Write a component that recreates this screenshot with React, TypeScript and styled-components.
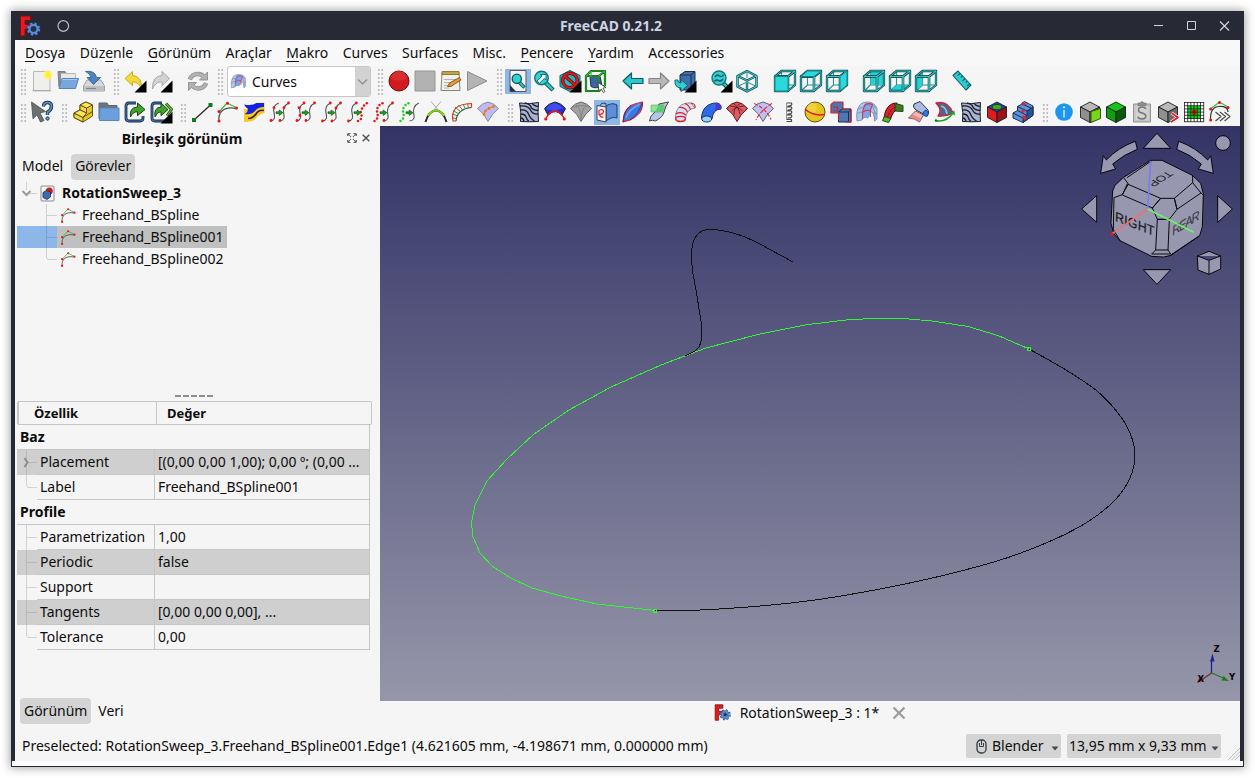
import React, { ReactNode } from "react";
import styled, { createGlobalStyle, css } from "styled-components";

const GlobalStyle = createGlobalStyle`
  html, body { margin: 0; padding: 0; background: #fff; }
  body { overflow: hidden; font-family: "Noto Sans", sans-serif; font-size: 13.98px; color: #0c0c0c; }
  *, *::before, *::after { box-sizing: border-box; }
`;

const LINE = "#c6c6c6";
const SURFACE = "#f5f5f5";
const FRAME = "#272a34";

/* ---------- window frame ---------- */

const Page = styled.div`
  width: 1255px;
  height: 778px;
  padding: 11px;
  overflow: hidden;
`;

const Window = styled.div`
  display: flex;
  flex-direction: column;
  width: 1233px;
  height: 756px;
  background: ${FRAME};
  box-shadow: 0 0 9px 1px rgba(0, 0, 0, 0.36);
  line-height: 20px;
  white-space: nowrap;
`;

const TitleBar = styled.header`
  display: grid;
  grid-template-columns: 1fr auto 1fr;
  align-items: center;
  height: 29px;
  flex: none;
  padding: 0 13px 0 8px;
  color: #cfd3e4;
`;

const TitleSide = styled.div<{ $end?: boolean }>`
  display: flex;
  align-items: center;
  justify-content: ${(p) => (p.$end ? "flex-end" : "flex-start")};
  gap: ${(p) => (p.$end ? "21px" : "15px")};
`;

const TitleText = styled.h1`
  margin: 0;
  padding-right: 28px;
  font-size: 13.9px;
  font-weight: 700;
  line-height: 20px;
`;

const Client = styled.div`
  display: flex;
  flex-direction: column;
  flex: none;
  height: 721px;
  margin: 0 4px;
  background: ${SURFACE};
`;

const BottomEdge = styled.div`
  height: 5px;
  margin: 0 1px;
  background: #fafcfd;
`;

/* ---------- menu and toolbars ---------- */

const MenuBar = styled.nav`
  display: flex;
  align-items: center;
  height: 26px;
  flex: none;
  gap: 14.5px;
  padding: 0 0 0 10px;
  background: #f8f8f8;
`;

const MenuItem = styled.span`
  u { text-decoration-thickness: 1px; text-underline-offset: 3px; }
`;

const ToolBar = styled.div<{ $tall?: boolean }>`
  display: flex;
  align-items: center;
  height: ${(p) => (p.$tall ? 31 : 29)}px;
  flex: none;
  padding: ${(p) => (p.$tall ? 0 : 2)}px 0 0 5px;
`;

const Grip = styled.span<{ $before?: number; $tall?: boolean }>`
  width: 7px;
  height: ${(p) => (p.$tall ? 27 : 20)}px;
  margin: 0 2px 0 ${(p) => p.$before ?? 6}px;
  flex: none;
  background-image: radial-gradient(circle at 50% 50%, #bdbdbd 0 1.1px, transparent 1.4px);
  background-size: 3.5px 4px;
`;

const ToolButton = styled.span<{ $on?: boolean; $before?: number }>`
  display: flex;
  align-items: flex-start;
  justify-content: center;
  width: 26px;
  height: 25px;
  flex: none;
  margin-left: ${(p) => p.$before ?? 0}px;
  ${(p) => p.$on && css`background: #8db7e9;`}
`;

const Combo = styled.div`
  display: flex;
  align-items: center;
  width: 144px;
  height: 31px;
  flex: none;
  margin-left: 1px;
  border: 1px solid ${LINE};
  border-radius: 3px;
  background: #fff;
  padding-left: 2px;
  overflow: hidden;
`;

const ComboLabel = styled.span`
  flex: 1;
  padding-left: 5px;
`;

const ComboArrow = styled.span`
  display: flex;
  align-items: center;
  justify-content: center;
  width: 15px;
  height: 100%;
  background: #d2d2d2;
`;

/* ---------- body ---------- */

const Body = styled.div`
  display: flex;
  height: 602px;
  flex: none;
`;

const Dock = styled.aside`
  display: flex;
  flex-direction: column;
  width: 365px;
  flex: none;
`;

const DockTitle = styled.div`
  display: flex;
  align-items: center;
  height: 26px;
  padding: 0 10px 0 4px;
  font-weight: 700;
  font-size: 14px;
`;

const DockTitleText = styled.span`
  flex: 1;
  text-align: center;
  padding-right: 2px;
`;

const DockActions = styled.span`
  display: flex;
  gap: 5px;
  align-items: center;
  padding-bottom: 2px;
`;

const Tabs = styled.div<{ $bottom?: boolean }>`
  display: flex;
  align-items: center;
  height: 30px;
  padding: 0 0 0 ${(p) => (p.$bottom ? 5 : 3)}px;
  gap: ${(p) => (p.$bottom ? 3 : 4)}px;
  line-height: ${(p) => (p.$bottom ? 26 : 24)}px;
  ${(p) => p.$bottom && css`margin-top: auto; margin-bottom: 2px;`}
`;

const Tab = styled.span<{ $active?: boolean }>`
  height: 26px;
  padding: 0 4px;
  border-radius: 4px;
  background: ${(p) => (p.$active ? "#d4d4d4" : "transparent")};
`;

const Tree = styled.ul`
  list-style: none;
  margin: 0;
  padding: 0 0 0 2px;
  height: 210px;
`;

const TreeRow = styled.li`
  display: flex;
  align-items: center;
  height: 22px;
`;

const Branch = styled.span<{ $w: number; $on?: boolean }>`
  display: flex;
  width: ${(p) => p.$w}px;
  height: 22px;
  background: ${(p) => (p.$on ? "#8db7e9" : "transparent")};
`;

const TreeLabel = styled.span<{ $on?: boolean; $root?: boolean }>`
  display: flex;
  align-items: center;
  gap: 5px;
  height: 22px;
  padding: 0 3.500px 0 3px;
  background: ${(p) => (p.$on ? "#bfc0c0" : "transparent")};
  ${(p) => p.$root && css`font-weight: 700; font-size: 13.95px; gap: 7px;`}
`;

const Splitter = styled.div`
  display: flex;
  justify-content: center;
  align-items: center;
  gap: 2px;
  height: 7px;
  padding-right: 7px;
`;

const SplitDash = styled.i`
  width: 6px;
  height: 2px;
  background: #8e8e8e;
`;

const PropHead = styled.div`
  display: grid;
  grid-template-columns: 138px 1fr;
  width: 355px;
  height: 24px;
  margin: 2px 0 0 2px;
  border: 1px solid ${LINE};
  border-left-width: 2px;
  border-radius: 2px;
  font-weight: 700;
  font-size: 13px;
  line-height: 22px;
`;

const PropHeadCell = styled.span<{ $pad: number; $first?: boolean }>`
  padding-left: ${(p) => p.$pad}px;
  border-right: ${(p) => (p.$first ? `1px solid ${LINE}` : "0")};
`;

const PropTable = styled.div`
  width: 353px;
  margin-left: 2px;
  border-right: 1px solid ${LINE};
`;

const PropGroup = styled.div`
  height: 25px;
  padding-left: 3px;
  border-bottom: 1px solid ${LINE};
  font-weight: 700;
  font-size: 14px;
  line-height: 24px;
`;

const PropRow = styled.div<{ $alt?: boolean }>`
  display: grid;
  grid-template-columns: 20px 118px 1fr;
  height: 25px;
  line-height: 24px;
  background: ${(p) => (p.$alt ? "#cfcfcf" : "transparent")};
`;

const PropName = styled.span`
  padding-left: 3px;
  border-bottom: 1px solid ${LINE};
  border-right: 1px solid ${LINE};
`;

const PropValue = styled.span`
  padding-left: 3px;
  border-bottom: 1px solid ${LINE};
`;

const Workspace = styled.main`
  display: flex;
  flex-direction: column;
  width: 860px;
`;

const Viewport = styled.div`
  height: 575px;
  background: linear-gradient(#333366, #9696aa);
  svg { display: block; }
`;

const DocTabs = styled.div`
  display: flex;
  justify-content: center;
  align-items: center;
  height: 27px;
  padding: 0 0 4px 0;
`;

const DocTab = styled.span`
  display: flex;
  align-items: center;
`;

const DocName = styled.span`
  margin: 0 13px 0 9px;
`;

const StatusBar = styled.footer`
  display: flex;
  align-items: center;
  height: 33px;
  padding: 3px 0 0 7px;
`;

const StatusText = styled.span`
  flex: 1;
`;

const StatusButton = styled.span<{ $w: number }>`
  display: flex;
  align-items: center;
  justify-content: space-between;
  width: ${(p) => p.$w}px;
  height: 24px;
  margin-right: 6px;
  padding: 0 2px;
  border-radius: 2px;
  background: #d4d4d4;

  > svg { margin-top: 4px; }
`;

const ButtonLabel = styled.span<{ $icon?: boolean }>`
  display: flex;
  align-items: center;
  gap: 5px;
  padding-left: ${(p) => (p.$icon ? 8 : 0)}px;
`;

const ResizeCorner = styled.span`
  align-self: flex-end;
  height: 13px;
  width: 12px;
  margin-left: 1px;
  svg { display: block; }
`;

/* ---------- icons ---------- */

const Svg = ({ children, size = 24, box = "0 0 24 24" }: { children: ReactNode; size?: number; box?: string }) => (
  <svg width={size} height={size} viewBox={box} fill="none" strokeLinejoin="round">
    {children}
  </svg>
);

const Dots = ({ at, c = "#f01010", r = 1.25 }: { at: number[][]; c?: string; r?: number }) => (
  <g fill={c}>{at.map(([x, y], i) => <circle key={i} cx={x} cy={y} r={r} />)}</g>
);

const Corner = () => <path d="M23.500 11.500v12h-12z" fill="#000" />;

const Logo = ({ size }: { size: number }) => (
  <Svg size={size} box="0 0 22 22">
    <path d="M1.500 1h10v4.500H6v4h5V14H6v7H1.500z" fill="#e31b20" stroke="#7c0d10" strokeWidth="1" />
    <circle cx="14.500" cy="14" r="5.600" stroke="#20457a" strokeWidth="3" strokeDasharray="2.400 2" />
    <circle cx="14.500" cy="14" r="4" stroke="#20457a" strokeWidth="3.200" />
    <circle cx="14.500" cy="14" r="5.500" stroke="#5c8fd6" strokeWidth="1.800" strokeDasharray="2.200 2.200" />
    <circle cx="14.500" cy="14" r="4" stroke="#5c8fd6" strokeWidth="1.900" />
    <circle cx="14.500" cy="14" r="2.300" fill="#23304a" />
  </Svg>
);

const SplineMini = ({ size = 24 }: { size?: number }) => (
  <Svg size={size}>
    <path d="M3 12 11 3l10 5" stroke="#3fb83f" strokeWidth="1.200" />
    <path d="M3 21C2 13 7 6 20 8.500" stroke="#555" strokeWidth="1.300" />
    <Dots at={[[3, 21], [3, 11.500], [11.500, 3.200], [20.500, 8]]} r={1.500} />
  </Svg>
);

type BlendKind = { left?: number[][]; right?: number[][]; dotLeft?: string; dotRight?: string };
const Blend = ({ left = [], right = [], dotLeft, dotRight }: BlendKind) => (
  <Svg>
    {dotLeft ? (
      <Dots c={dotLeft} at={[[2.500, 21], [5, 18.500], [5.700, 15], [5, 11.500], [5.500, 8], [7.500, 5], [10.500, 3.200]]} r={1.250} />
    ) : (
      <path d="M2.500 21c4.500-.5 4.500-4 3.700-7S5 9.500 6.500 6.500 9.500 4 10.500 3" stroke="#505050" strokeWidth="1.100" />
    )}
    {dotRight ? (
      <Dots c={dotRight} at={[[12, 21], [14.800, 19], [15.600, 15.500], [14.800, 12], [16, 8.500], [18, 5.500], [20.800, 3.200]]} r={1.250} />
    ) : (
      <path d="M11.500 21c5-.5 5-3.500 4.300-7s0-8.500 5-11" stroke="#505050" strokeWidth="1.100" />
    )}
    <path d="M8 11.800h3.200V10l3.800 2.700-3.800 2.700v-1.800H8z" fill="#14a314" stroke="#0a4a0a" strokeWidth=".6" />
    <Dots at={[...left, ...right]} r={1.400} />
  </Svg>
);

const F = "M2 7.500h13V22H2z";
const T = "M2 7.500 8.500 2H22l-7 5.500z";
const R = "M15 7.500 22 2v14l-7 6z";
const B = "M8.500 2H22v14H8.500z";
const BT = "M2 22 8.500 16H22l-7 6z";
const L = "M2 7.500 8.500 2v14L2 22z";
const ViewCube = ({ face }: { face: string }) => (
  <Svg>
    <path d={B} stroke="#2a8f93" strokeWidth="1.100" />
    <path d="M2 22 8.500 16" stroke="#2a8f93" strokeWidth="1.100" />
    <path d={face} fill="#27d0d4" />
    <g stroke="#0b5054" strokeWidth="2.300"><path d={F} /><path d={T} /><path d={R} /></g>
    <g stroke="#44c6c9" strokeWidth=".9"><path d={F} /><path d={T} /><path d={R} /></g>
    {(face === F || face === T || face === R) && <path d={face} fill="#2bd9dc" stroke="#128589" strokeWidth="1" />}
  </Svg>
);

const Box = ({ top, left, right, children }: { top: string; left: string; right: string; children?: ReactNode }) => (
  <Svg>
    <g stroke="#1d1d1d" strokeWidth=".9">
      <path d="M2.500 7 12 2l9.500 5L12 12z" fill={top} />
      <path d="M2.500 7 12 12v10.500L2.500 17.500z" fill={left} />
      <path d="M21.500 7 12 12v10.500l9.500-5z" fill={right} />
    </g>
    {children}
  </Svg>
);

const Zebra = () => (
  <Svg>
    <path d="M2.500 3q10 1.500 19-.5-1 9 0 19-9.500.5-18 0 1-9-1-18.500z" fill="#a9b3cf" stroke="#1c2030" strokeWidth="1" />
    <path d="M3 6q8-1 10.500 4t8 4M3.500 10q6-1 8 4t6 7M4 14q4 0 5 3t3 4.500M4 18q2 0 3 3M8 3q5 1 6 4t7.500 3.500M15 3q1.500 3 6.500 3.500" stroke="#1a1f2e" strokeWidth="1.350" />
  </Svg>
);

const Fan = ({ fill, edge = "#444", children }: { fill: string; edge?: string; children?: ReactNode }) => (
  <Svg>
    <path d="M1.500 8.500Q6 3 12 2 18 3 22.500 8.500 16 13.500 12 21.500 8.500 13.500 1.500 8.500z" fill={fill} stroke={edge} strokeWidth="1" />
    {children}
  </Svg>
);

const LensBase = ({ children }: { children?: ReactNode }) => (
  <Svg>
    <path d="m13.500 13.500 7.500 7.500" stroke="#06494d" strokeWidth="4.400" />
    <path d="m13.500 13.500 7 7" stroke="#2fc6ca" strokeWidth="2.500" />
    <circle cx="9.500" cy="9" r="6.800" fill="#35cfd3" stroke="#0f777b" strokeWidth="1.400" />
    {children}
  </Svg>
);

const CurvedSurface = ({ size = 24 }: { size?: number }) => (
  <Svg size={size}>
    <path d="M2 21C1 11 3 4 9 2.500 15 1 20 3 22 8.500V19q-1.500 1.500-2.500 2Q19.500 13 16 11.500L13 18Q8 16 7 20z" fill="#a9c8f0" stroke="#8495b4" strokeWidth="1" />
    <path d="M2 14q5-4 6 0M3 9q5-3 7 1M20 19q1-7-2-12M9 6q7-3 12 2M18 13q2-1 4 1" stroke="#6a86b8" strokeWidth=".8" />
    <path d="M9 4.500Q14 2 18 5q-3 4-2.500 7L13 18H8q-1-7 1-13.500z" fill="#6f9de6" opacity=".8" />
    <path d="M7.500 19Q7 8 11 3.500M15.500 17Q14.500 9 18 4.500M8 12q4-3 7.500-1M10.500 4.500q4-2 7.500.5" stroke="#d33650" strokeWidth="1.100" />
  </Svg>
);

const icons: Record<string, ReactNode> = {
  new: (
    <Svg>
      <path d="M3.500 2.500H20V21.500H3.500z" fill="#efefec" stroke="#b9b9b5" />
      <path d="M2.500 21.800h18.500" stroke="#a5a5a0" strokeWidth="1" />
      <circle cx="18" cy="6" r="4.800" fill="#fcf58a" opacity=".75" /><circle cx="18" cy="6" r="2.900" fill="#fff02a" />
    </Svg>
  ),
  open: (
    <Svg>
      <path d="M2 2.500h7l1.500 2H19V18H3z" fill="#8a8f92" stroke="#7d8082" />
      <path d="M5 4.500h14V16H5z" fill="#e9e9e9" />
      <path d="M6 9.500h16.500l-3 10H3z" fill="#78a7de" stroke="#5583bd" />
      <path d="M6.500 10.500H21" stroke="#a9c9ef" />
    </Svg>
  ),
  save: (
    <Svg>
      <path d="M5 11h14l3.500 6v5H1.500v-5z" fill="#d6d8d9" stroke="#a0a3a5" />
      <path d="M2 17h20v4.500H2z" fill="#bcc0c2" /><path d="M4 19.500h10" stroke="#858585" strokeWidth="1.100" />
      <path d="M3.500 2.500Q13 1 14.500 8.500h4l-7 7-6.500-7H9Q8.500 5 3.500 2.500z" fill="#4c83c0" stroke="#2d5b8c" strokeWidth=".8" />
    </Svg>
  ),
  undo: (
    <Svg>
      <path d="M2 9.500 9.500 2.500v4Q19 7 18.500 20 16 13 9.500 12.800v4z" fill="#f5d839" stroke="#c4a11a" strokeWidth=".9" />
      <Corner />
    </Svg>
  ),
  redo: (
    <Svg>
      <path d="M20.500 9.500 13 2.500v4Q3 7 3.500 20 6 13 13 12.800v4z" fill="#d2d2d2" stroke="#a5a5a5" strokeWidth=".9" />
      <Corner />
    </Svg>
  ),
  refresh: (
    <Svg>
      <path d="M3.800 10.500Q6 5 12 5q3.500 0 5.500 2.500M20.200 14Q18 19.500 12 19.500q-3.500 0-5.500-2.500" stroke="#8e8e8e" strokeWidth="4.400" />
      <path d="M21.500 3v8h-8zM2.500 21.500v-8h8z" fill="#b2b2b2" stroke="#8e8e8e" strokeWidth=".9" />
      <path d="M4 10Q6 5 12 5q3.500 0 6 3M20 14.500q-2 5-8 5-3.500 0-6-3" stroke="#b2b2b2" strokeWidth="2.900" />
    </Svg>
  ),
  record: <Svg><circle cx="12" cy="12" r="10" fill="#d01a20" stroke="#6f0a0c" /><path d="M4 10a8 8 0 0 1 16 0q-8 3-16 0z" fill="#e0383b" opacity=".6" /></Svg>,
  stop: <Svg><path d="M2 2h20v20H2z" fill="#b2b2b2" stroke="#969696" /></Svg>,
  macro: (
    <Svg>
      <path d="M3 3.500h17l1 18H2z" fill="#f0efe9" stroke="#85837b" />
      <path d="M3 2.500h17v3H3z" fill="#c1a545" stroke="#7c6a27" strokeWidth=".8" />
      <path d="M5 10.500h12M5 13.500h8M5 16.500h6M5 19h5" stroke="#a5a5a5" strokeWidth=".8" />
      <path d="m8.500 17.500 3.500 0L22 11l-1.500-2.500L10.500 14z" fill="#e89a35" stroke="#6f4413" strokeWidth=".8" />
    </Svg>
  ),
  play: <Svg><path d="M2.500 2.500v19L22 12z" fill="#b4b4b4" stroke="#8c8c8c" /></Svg>,
  fit: (
    <Svg>
      <path d="M4 1.500h16v21H4z" fill="#f2f2f2" stroke="#5a5a5a" /><path d="M4 16v6.500h6z" fill="#30343a" />
      <path d="m13 13 5.500 5.500" stroke="#06494d" strokeWidth="3.600" /><path d="m13 13 5 5" stroke="#2fc6ca" strokeWidth="2" />
      <circle cx="10.800" cy="9.800" r="4.600" fill="#35cfd3" stroke="#06575b" strokeWidth="1.300" />
    </Svg>
  ),
  zoomSel: <LensBase><path d="m5 12 5-5-1.500-1.500h5.500V11l-1.600-1.600-4.900 4.800z" fill="#eafcfc" stroke="#06575b" strokeWidth=".8" /></LensBase>,
  drawStyle: (
    <Svg>
      <path d="m12 1.500 10 5v11l-10 5-10-5v-11z" fill="#20b9bd" stroke="#0a5c60" />
      <circle cx="12" cy="11.500" r="7.300" stroke="#54090c" strokeWidth="3.400" /><path d="m7 7 10 9" stroke="#54090c" strokeWidth="3.400" />
      <circle cx="12" cy="11.500" r="7.300" stroke="#e0191e" strokeWidth="2.100" /><path d="m7 7 10 9" stroke="#e0191e" strokeWidth="2.100" />
      <Corner />
    </Svg>
  ),
  bbox: (
    <Svg>
      <path d="M6 8.500q4-3.500 10-1l2 9q-6 4-11 1z" fill="#3c659f" stroke="#183459" />
      <g stroke="#0d4c10" strokeWidth="2.200"><path d="M2 7h13v15H2zM2 7l5-5h14l-6 5M21 2v14l-6 6" /></g>
      <g stroke="#32b436" strokeWidth="1.200"><path d="M2 7h13v15H2zM2 7l5-5h14l-6 5M21 2v14l-6 6M7 2v6" /></g>
      <path d="m14 13.500 8 5-3 .7 2 3.300-1.700 1-2-3.300-2.300 2z" fill="#fff" stroke="#222" strokeWidth=".7" />
    </Svg>
  ),
  back: <Svg><path d="m2 12 8.500-8v5.500H22v5H10.500V20z" fill="#2cc7cb" stroke="#0a5f63" strokeWidth="1.200" /></Svg>,
  forward: <Svg><path d="m22 12-8.500-8v5.500H2v5h11.500V20z" fill="#b9b9b9" stroke="#868686" strokeWidth="1.200" /></Svg>,
  link: (
    <Svg>
      <path d="m7 6 5-3.500h10V17l-4 4H7z" fill="#3f6ea8" stroke="#16304f" /><path d="M7 6h11l4-3.500M18 6v15" stroke="#16304f" />
      <path d="M2 11q-1 7.500 6 8v3.500l6.500-6L8 10.500v3.500q-3.500 0-3-3z" fill="#34cfd3" stroke="#0a5f63" strokeWidth=".9" />
      <Corner />
    </Svg>
  ),
  sync: (
    <Svg>
      <path d="m14 14 5 5" stroke="#06494d" strokeWidth="4.200" /><path d="m14 14 5 5" stroke="#2fc6ca" strokeWidth="2.400" />
      <circle cx="10" cy="9" r="7" fill="#35cfd3" stroke="#0f777b" strokeWidth="1.400" />
      <path d="M6 8q2-3 4.500-1.200t4-1.300M5.500 12.500q1.500-2.500 4-1t4.500-1.500" stroke="#0b5d61" strokeWidth="1.500" />
      <Corner />
    </Svg>
  ),
  iso: (
    <Svg>
      <g stroke="#0b5054" strokeWidth="2.400"><path d="m12 2 9.500 5v10.500l-9.500 5-9.500-5V7zM2.500 7l9.500 4.500L21.500 7M12 11.500v11" /></g>
      <path d="M2.500 17.500 12 13l9.500 4.500M12 2v7" stroke="#2a8f93" strokeWidth="1" />
      <g stroke="#44c4c8" strokeWidth="1"><path d="m12 2 9.500 5v10.500l-9.500 5-9.500-5V7zM2.500 7l9.500 4.500L21.500 7M12 11.500v11" /></g>
    </Svg>
  ),
  front: <ViewCube face={F} />,
  top: <ViewCube face={T} />,
  right: <ViewCube face={R} />,
  rear: <ViewCube face={B} />,
  bottom: <ViewCube face={BT} />,
  left: <ViewCube face={L} />,
  ruler: (
    <Svg>
      <path d="m3 6.500 5-4.500 13 14-5 5z" fill="#2fcbcf" stroke="#0a5f63" strokeWidth="1.100" />
      <path d="m10 4.500-2.400 2.200M12.500 7l-1.600 1.500M15 9.600l-2.400 2.200M17.400 12.200l-1.700 1.500M19.500 14.800l-2.400 2.200" stroke="#0a5f63" strokeWidth="1.100" />
    </Svg>
  ),
  whatsThis: (
    <Svg>
      <path d="m1.500 2 14 9.500-5.500 1.500 4 7.500-3.500 1.500L7 14.800l-4 4z" fill="#6b7071" stroke="#4b4f50" strokeWidth=".8" />
      <path d="M13.500 6.500q0-4 4-4t4 3.800-4 5.700v3" stroke="#1c3656" strokeWidth="3.400" />
      <path d="M13.500 6.500q0-4 4-4t4 3.800-4 5.700v3" stroke="#5d8fc9" strokeWidth="1.600" />
      <circle cx="17.500" cy="18.500" r="1.700" fill="#5d8fc9" stroke="#1c3656" strokeWidth=".9" />
    </Svg>
  ),
  part: (
    <Svg>
      <g stroke="#54430a" strokeWidth=".9">
        <path d="m3 13 6-3V5l6-3 6.500 3v11L12 22l-9-4.500z" fill="#e7c822" />
        <path d="m9 5 6.500 3v5L9 10zM3 13l9 4.500V22l-9-4.500z" fill="#f3da3c" />
        <path d="m9 5 6-3 6.500 3-6 3zM3 13l6-3 6.500 3-3.500 4.500z" fill="#fbe95a" />
        <path d="m12 17.500 9.500-6" />
      </g>
    </Svg>
  ),
  folder: (
    <Svg>
      <path d="M2 3h8l1.500 2.500H20V19H2z" fill="#6e7478" stroke="#5f6468" />
      <path d="M3 8h19V20.500H2.500z" fill="#6b9fdd" stroke="#5788c4" />
    </Svg>
  ),
  linkMake: (
    <Svg>
      <path d="M13 3H6Q3 3 3 6v12q0 3 3 3h11q3 0 3-3v-2" stroke="#142c4c" strokeWidth="2.800" />
      <path d="M13 3H6Q3 3 3 6v12q0 3 3 3h11q3 0 3-3v-2" stroke="#4874ab" strokeWidth="1.100" />
      <path d="M7.500 17Q6 7.500 14.500 7V3l7.500 6.500-7.500 6.200v-4q-5 0-7 5.300z" fill="#3fa32c" stroke="#164b0c" strokeWidth="1" />
    </Svg>
  ),
  linkActions: (
    <Svg>
      <path d="M13 3H6Q3 3 3 6v12q0 3 3 3h11" stroke="#142c4c" strokeWidth="2.800" />
      <path d="M13 3H6Q3 3 3 6v12q0 3 3 3h11" stroke="#4874ab" strokeWidth="1.100" />
      <path d="m17 3.500 5.500 6-4.500 6" stroke="#164b0c" strokeWidth="2.800" /><path d="m17 3.500 5.500 6-4.500 6" stroke="#6bc43e" strokeWidth="1.200" />
      <path d="M6 17Q4.500 7.500 12 7V3l7 6.500-7 6.200v-4q-4 0-6 5.300z" fill="#3fa32c" stroke="#164b0c" strokeWidth="1" />
      <Corner />
    </Svg>
  ),
  line: <Svg><path d="M4 20 20.500 5" stroke="#222" strokeWidth="1.200" /><path d="M2 18h4v4H2zM18.500 3h4v4h-4z" fill="#0b7c1c" /></Svg>,
  spline: <SplineMini />,
  paint: (
    <Svg>
      <path d="M2 9q9 1 11-4 4-3 9.500-2v10q-6 1-8.500 5.500-3 3.500-12 3.500z" fill="#f8c81c" />
      <path d="M2 4.500q9 1.500 12-1.500h8v4q-6 0-9 4-4 4-10 3 3-2 3-5-2-1-4-4.500z" fill="#1420e6" />
      <path d="M6 18.500q5 0 8-4.500t8-3.500" stroke="#20232f" strokeWidth="1.600" />
    </Svg>
  ),
  blend1: <Blend left={[[6, 7.700], [3, 20.500]]} right={[[16, 7.700], [20.500, 3], [12, 20.500]]} />,
  blend2: <Blend left={[[5, 7.700], [10, 3], [6, 15.500], [3, 20.500]]} right={[[20.500, 3], [12, 20.500]]} />,
  blend3: <Blend left={[[2.500, 21], [10.300, 3]]} right={[[16, 8], [20.500, 3], [12, 21]]} />,
  blend4: <Blend left={[[2.500, 21], [10.300, 3]]} dotRight="#f01010" />,
  blend5: <Blend dotLeft="#f01010" right={[[20.500, 3], [12, 20.500]]} />,
  blend6: <Blend dotLeft="#21d321" right={[]} />,
  hanger: (
    <Svg>
      <path d="M7 1.500 16 12M17 1.500 8 12" stroke="#a8a8a8" />
      <path d="M1.500 22Q5 10.500 12 10.500T22.500 22" stroke="#222" strokeWidth="1.900" /><path d="M4 16q3-5.500 8-5.500t8 5.500" stroke="#7cd414" strokeWidth="2.200" />
    </Svg>
  ),
  comb: (
    <Svg>
      <path d="M6 21Q7 9 21.500 7.500" stroke="#3a3a3a" strokeWidth="1.100" />
      <path d="m2.500 18 4 .5M2.500 14l5 2M3 10.500l6 3.500M5 7l6 5M8.500 5l4.500 5.500M13 4l2.500 5M17.500 3.500l1 4.500" stroke="#2f9b45" strokeWidth="1" />
      <path d="M6 21H3C1 10 6 4 21.500 3.500v4" stroke="#e2322a" strokeWidth="1.200" />
    </Svg>
  ),
  surfSplit: <Fan fill="#b9bdf4" edge="#8a8a9a"><path d="M8 14.500q0-5 10-8" stroke="#f07820" strokeWidth="1.100" /><Dots c="#f07820" at={[[8, 14.500], [9.500, 11], [13, 8.500], [17.500, 6.500]]} r={1.400} /></Fan>,
  zebra: <Zebra />,
  trimBlue: (
    <Svg>
      <path d="M1.500 8.500Q6 3 12 2 18 3 22.500 8.500L19 15q-7-7-14 0z" fill="#2030e0" stroke="#222" />
      <path d="M2.500 9q7 1 9 4 3-4 9-5-5-4-9-5-5 1-9 6z" fill="#4d62f4" opacity=".6" />
      <path d="M2.500 19Q7 11 12 11t9.500 8" stroke="#f01010" strokeWidth="1.300" /><Dots at={[[2.800, 19], [21.300, 19]]} r={1.600} />
    </Svg>
  ),
  greyFan: <Fan fill="#a2a2a2" edge="#666"><path d="M7 5q5 3 5 15M17 5q-4 4-5 15M4 7.500q10-4 16 0" stroke="#858585" /></Fan>,
  sketchMap: (
    <Svg>
      <path d="M11 6q6-4 11-1v13q-5-2-11 3z" fill="#5d8fd8" stroke="#1f3f73" /><path d="M11 6V3.500Q6 2 5 6" fill="#9bbbe8" stroke="#1f3f73" />
      <path d="M2 5.500 11 7v15l-9-2z" fill="#f4f4f8" stroke="#444" /><path d="M4.500 10q4-1 4 1.500t-4 3q1 3.500 4 2.500M4 10v5" stroke="#e52330" strokeWidth="1.200" />
    </Svg>
  ),
  loft: (
    <Svg>
      <path d="M2 22 3 15Q5 9 10 5.500 15 3 21.500 2 22 8 18.500 13 14 18 9 20z" fill="#3b78e0" stroke="#e01c2c" strokeWidth="1.100" />
      <path d="M5 18Q7 10 19 4" stroke="#6f9ff0" strokeWidth="1.800" /><path d="M2 22Q3 10 10 5.500M9 20Q18 14 21.500 2" stroke="#1d2e5a" strokeWidth=".7" />
    </Svg>
  ),
  sheet: (
    <Svg>
      <path d="M2.500 21Q3 16 7 13T12 4l9.500-2Q18 7 17 12T8.500 21q-3-1.500-6 0z" fill="#b4c6e8" stroke="#444" /><path d="M4 5h13v7H4z" fill="#7fe08b" opacity=".85" stroke="#39a348" strokeWidth=".6" />
      <path d="M12 5h5l-1 7H8z" fill="#5fc870" />
    </Svg>
  ),
  pipeRed: (
    <Svg>
      <path d="M2.500 19C2 9 8 2 18 3l4 5q-9 1-9.500 11-5 4-10 0z" fill="#d6def6" stroke="#8a8a8a" />
      <ellipse cx="7.500" cy="19" rx="4.900" ry="2.700" stroke="#e01c2c" strokeWidth="1.200" /><path d="M2.800 14q5-3 10 1M6 7.500q6-.5 8.500 4.500M12 3.500q4 1.500 5.500 6M18 3q5 1 4 5" stroke="#e01c2c" strokeWidth="1.200" />
    </Svg>
  ),
  pipeBlue: (
    <Svg>
      <path d="M2.500 18C3 9 8 3 18 3q5 1 4 6-8 0-9 10z" fill="#2f6be6" stroke="#15306e" /><path d="M17 3q5 0 5 6-4 0-6 2z" fill="#4a35d8" />
      <ellipse cx="7.700" cy="19" rx="5" ry="3" fill="#8fd6f4" stroke="#15306e" />
    </Svg>
  ),
  gordon: <Fan fill="#dd5a62" edge="#521317"><path d="M8.500 3.500q5.500 4 6.500 11M15.500 3.500q-7 3-6.500 11M5 6q9 1 12.500 5M19 6Q10 7 6.500 11" stroke="#6c1a1f" strokeWidth=".9" /></Fan>,
  segment: <Fan fill="#bcc0f5" edge="#666"><path d="M3 3.500q12 5 17 16M21 3.500Q10 10 5 20" stroke="#e8202a" strokeWidth="1.100" strokeDasharray="4 1.500" /></Fan>,
  helix: (
    <Svg>
      <path d="M9.500 3h5q1.500 3-4 3.200M9.500 7h5q1.500 3-4 3.200M9.500 11h5q1.500 3-4 3.200M9.500 15h5q1.500 3-4 3.200M9.500 19.500h5v2h-5" stroke="#4a4a4a" strokeWidth="1.200" />
      <path d="M9.500 3v17" stroke="#8a8a8a" strokeWidth=".9" />
    </Svg>
  ),
  sphere: (
    <Svg><circle cx="12" cy="12" r="10" fill="#e6c31f" stroke="#5f4f0c" /><circle cx="9" cy="8" r="5" fill="#f4dc50" opacity=".6" /><path d="M2 9q8 7.500 20 5.500" stroke="#e01c2c" strokeWidth="1.500" /></Svg>
  ),
  blocks: (
    <Svg>
      <path d="m2 4.500 3-2.500h9v9l-4 2H2z" fill="#4a78b4" stroke="#d2202e" strokeWidth="1.200" /><path d="M9.500 12 13 9h9v13H9.500z" fill="#4a78b4" stroke="#16304f" />
      <path d="M9.500 12h10L22 9M19.500 12V22" stroke="#16304f" /><path d="M4 7h4.500v4H4M9.500 12v8M22 10v12h-5M13 9h9" stroke="#d2202e" strokeWidth="1.200" />
    </Svg>
  ),
  curved: <CurvedSurface />,
  pipeGreen: (
    <Svg>
      <path d="M3 18C4 9 8 3 16 3v7q-4 1-6.500 9z" fill="#d2242c" stroke="#4b0c0f" /><path d="M14 3.500 22 5.500v6L14 11z" fill="#3f7a1e" stroke="#1d4a0c" />
      <path d="M3.500 16.500 10 18.500 7.500 22.500 1.500 20.500z" fill="#57b82d" stroke="#1d4a0c" /><path d="M6.500 17Q9 9 15 7" stroke="#8f161c" />
    </Svg>
  ),
  tubeMix: (
    <Svg>
      <path d="m7 4 6-2.500 8 8.500q2 4-2 5.500L9 10Q5 7 7 4z" fill="#a9bce6" stroke="#333" /><path d="M19 10q4 3 1 6.500-4 0-4-4z" fill="#2f7cf0" stroke="#173d80" />
      <path d="m1.500 18 7-7 8 4-4 7q-5-4-11-4z" fill="#f3b6b6" stroke="#666" /><path d="m1.500 18 4-3.500 9 4-2 3.500q-5-4-11-4z" fill="#ee6a6a" opacity=".6" />
    </Svg>
  ),
  sweep: (
    <Svg>
      <path d="M3 3q12-3 17 10-7 4-15 3 5-6-2-13z" fill="#49678f" stroke="#d2202e" strokeWidth="1.300" /><path d="M8 6q5 1 6 8" stroke="#aebdd4" strokeWidth="1.600" />
      <path d="M2 20.500q11 2.500 18-7.500" stroke="#13a82a" strokeWidth="1.600" /><path d="m21.500 10.500.5 5-4.500-2.500z" fill="#13a82a" /><circle cx="3" cy="20.500" r="1.200" fill="#0d7c1e" />
    </Svg>
  ),
  rgbBox: <Box top="#1745d8" left="#e01c20" right="#9c1216"><ellipse cx="12" cy="7" rx="4.800" ry="2.500" fill="#48a81c" stroke="#123c06" strokeWidth=".8" /></Box>,
  steps: (
    <Svg>
      <g stroke="#101f3c" strokeWidth=".9">
        <path d="m2 13 4.500-2.500v-4L11 4V3l2.500-1.500L22 6v9l-10 7.500L2 18z" fill="#5b92e0" />
        <path d="M12 22.500V18l4-2.500V11l6-4v8.500z" fill="#28549c" />
        <path d="m2 13 10 5M6.500 10.500 16 15.500M6.500 6.500 16 11M11 4l9 4" />
      </g>
      <path d="m10 4 3-1.500 3 1.500-3 2zM11 9l3 1.500-1 3-3-1.500zM12 15l4 2-2 3-3-1.500z" fill="#e8222c" opacity=".9" />
    </Svg>
  ),
  info: (
    <Svg><circle cx="12" cy="12" r="8.800" fill="#1d96ee" /><circle cx="12" cy="7.300" r="1.100" fill="#e8f4fd" /><path d="M12 10v7.500" stroke="#e8f4fd" strokeWidth="1.300" /></Svg>
  ),
  boxSheet: <Box top="#b9b9b9" left="#8f8f8f" right="#5e5e5e"><path d="m13 11.500 9.500-3v10l-9.500 4z" fill="#7ad41a" stroke="#2c5c06" strokeWidth="1" /></Box>,
  boxGreen: <Box top="#17c41a" left="#0fa012" right="#065c08" />,
  clipboard: (
    <Svg>
      <path d="M3.500 4h17v18h-17z" fill="#c4c4c4" stroke="#949494" /><path d="M5.500 6.500h13V20h-13z" fill="#d2d2d2" />
      <path d="M8 5.500V3h2q2-3 4 0h2v2.500z" fill="#8f8f8f" stroke="#777" strokeWidth=".7" />
      <path d="M16 9q-1-2-4-2-3.500 0-3.500 2.800T12 13t3.800 3-3.800 3q-3.500 0-4.200-2.200" stroke="#747474" strokeWidth="1.500" />
    </Svg>
  ),
  boxArrow: <Box top="#b9b9b9" left="#8f8f8f" right="#6a6a6a"><path d="m15.500 13 6.500 4.500-7 4.500" stroke="#fff" strokeWidth="3.200" /><path d="m15.500 13 6.500 4.500-7 4.500" stroke="#e81820" strokeWidth="1.700" /></Box>,
  pixelGrid: (
    <Svg>
      <path d="M2 2h20v20H2z" fill="#fff" /><path d="M5.700 5.700h12.800v12.800H5.700z" fill="#12d812" /><path d="M10 10h4.500v4.500H10z" fill="#e81820" />
      <path d="M2.500 2v20M5.700 2v20M8.900 2v20M12.100 2v20M15.300 2v20M18.500 2v20M21.700 2v20M2 2.500h20M2 5.700h20M2 8.900h20M2 12.100h20M2 15.300h20M2 18.500h20M2 21.700h20" stroke="#111" strokeWidth=".75" />
    </Svg>
  ),
  splineMore: (
    <Svg>
      <path d="m2.500 9 9-7 8.500 5" stroke="#3fb83f" strokeWidth="1.200" /><path d="M2.500 20Q2 7 11 6.500T20 12" stroke="#333" strokeWidth="1.200" />
      <path d="m7.500 12 5.500 4.500L7.500 21M12 12l5.500 4.500L12 21M16.500 12l5.500 4.500-5.500 4.500" stroke="#4a4a4a" strokeWidth="1.200" />
      <Dots at={[[2.700, 20], [2.700, 9], [11.500, 2.500], [20, 7.500]]} r={1.500} />
    </Svg>
  ),
};

type Item = { icon?: string; grip?: boolean; combo?: boolean; on?: boolean; before?: number };
const b = (icon: string, before?: number, on?: boolean): Item => ({ icon, before, on });
const g = (before?: number): Item => ({ grip: true, before });

const mainTools: Item[] = [
  g(0), b("new"), b("open"), b("save"),
  g(6), b("undo"), b("redo"), b("refresh", 11),
  g(6), { combo: true },
  g(6), b("record"), b("stop"), b("macro"), b("play"),
  g(6), b("fit", 0, true), b("zoomSel"), b("drawStyle"), b("bbox"), b("back", 11), b("forward"), b("link"),
  b("sync", 10), b("iso"), b("front", 12), b("top"), b("right"), b("rear", 11), b("bottom"), b("left"), b("ruler", 10),
];

const curveTools: Item[] = [
  g(0), b("whatsThis"),
  g(6), b("part"), b("folder"), b("linkMake"), b("linkActions"),
  g(6), ...["line", "spline", "paint", "blend1", "blend2", "blend3", "blend4", "blend5", "blend6", "hanger", "comb", "surfSplit"].map((n) => b(n)),
  g(6), b("zebra"), b("trimBlue"), b("greyFan"), b("sketchMap", 0, true),
  ...["loft", "sheet", "pipeRed", "pipeBlue", "gordon", "segment", "helix", "sphere", "blocks", "curved", "pipeGreen", "tubeMix", "sweep", "zebra", "rgbBox", "steps"].map((n) => b(n)),
  g(6), ...["info", "boxSheet", "boxGreen", "clipboard", "boxArrow", "pixelGrid", "splineMore"].map((n) => b(n)),
];

const Tools = ({ items, tall }: { items: Item[]; tall?: boolean }) => (
  <ToolBar $tall={tall}>
    {items.map((it, i) =>
      it.grip ? (
        <Grip key={i} $before={it.before} $tall={tall} />
      ) : it.combo ? (
        <Combo key={i}>
          <CurvedSurface size={17} />
          <ComboLabel>Curves</ComboLabel>
          <ComboArrow>
            <svg width="11" height="8" fill="none"><path d="m1 1.500 4.500 4.500L10 1.500" stroke="#8a8a8a" strokeWidth="1.200" /></svg>
          </ComboArrow>
        </Combo>
      ) : (
        <ToolButton key={i} $before={it.before} $on={it.on}>{icons[it.icon!]}</ToolButton>
      )
    )}
  </ToolBar>
);

/* ---------- 3D view ---------- */

const NavCube = () => (
  <g transform="translate(1065 120) scale(.33333)" fill="#9797b0" stroke="#07070c" strokeWidth="3" strokeLinejoin="round">
    <g shapeRendering="crispEdges">
      <path d="m276 40 41 45h-82zM235 449h82l-41 44zM50 267l45-40v80zM502 267l-44-40v80z" />
      <circle cx="474" cy="69" r="22" />
      <path d="M211 64l6 24Q178 102 143 132l9 15-45 13 8-53 9 13Q160 82 211 64z" />
      <path d="M341 64l-6 24q39 14 74 44l-9 15 45 13-8-53-9 13Q392 82 341 64z" />
      <path d="m397 408 35-14 35 14v39l-35 16-33-13zM397 408l35 13 35-13M432 421v42" />
      <path d="M257 121h34l91 45 25 24 8 32-3 98-8 27-86 59-22 5-36-2-95-47-18-20-9-32 5-97 7-17 26-24z" />
      <path d="M187 192 287 235 262 264 172 225zM328 235l55-47 25 31-72 49zM277 298h36l-4 92h-37zM287 235h41l8 33-23 30h-36l-15-34z" />
      <path d="M176 173l14 19-18 32-25 9M147 233l-2 95 20 34M383 188v-22M408 219l5 5M272 390l-12 12M309 390l11 16M260 402h55M262 121l-76 52M404 347l-84 56" fill="none" />
    </g>
    <g stroke="none" fill="#1b1b22" fontFamily="Liberation Sans, sans-serif" fontSize="40">
      <text transform="matrix(.92 .36 -.03 1 150 302)" textLength="128" stroke="#1b1b22" strokeWidth=".8">RIGHT</text>
      <text transform="matrix(.84 -.52 -.06 1.06 321 349)" fontSize="40" textLength="98" opacity=".8">REAR</text>
      <text transform="matrix(-.76 .5 -.72 -.42 277 171)" fontSize="39" textAnchor="middle">TOP</text>
    </g>
    <g fill="none" strokeWidth="5">
      <path d="M257 123 248 267" stroke="#7a7af4" />
      <path d="M248 267 142 341" stroke="#f07070" />
      <path d="M248 267 386 337" stroke="#6cf26c" />
      <path d="M137 343h9" stroke="#ff1010" strokeWidth="7" />
    </g>
  </g>
);

const AxisCross = () => (
  <g fill="none" strokeWidth="1.200">
    <path d="M1211.500 673v-13" stroke="#1b1b80" /><path d="m1212.500 653.500 2 8h-4.500z" fill="#2020a0" />
    <path d="m1211.500 673 12 5" stroke="#1e7d1e" /><path d="m1229 681-7.500-.500 2-4.500z" fill="#168016" />
    <path d="m1211.500 673-13 9" stroke="#8a1e24" /><path d="m1197 683 3-6.500 4 3.500z" fill="#8a1e24" />
    <g fill="#050505" fontFamily="DejaVu Sans, sans-serif" fontSize="8.500" fontWeight="700">
      <text x="1213.500" y="651.500">Z</text><text x="1229" y="679.500">Y</text><text x="1197.500" y="682">X</text>
    </g>
  </g>
);

/* Catmull-Rom spline through the given points, as a cubic path. */
const smooth = (pts: number[][]) =>
  pts.slice(1).reduce((d, p, i) => {
    const p0 = pts[Math.max(i - 1, 0)];
    const p1 = pts[i];
    const p3 = pts[Math.min(i + 2, pts.length - 1)];
    const c = [p1[0] + (p[0] - p0[0]) / 6, p1[1] + (p[1] - p0[1]) / 6, p[0] - (p3[0] - p1[0]) / 6, p[1] - (p3[1] - p1[1]) / 6];
    return `${d}C${c.join(" ")} ${p.join(" ")}`;
  }, `M${pts[0].join(" ")}`);

const darkArc = [[655, 610.5], [700, 610], [760, 606], [815, 600], [880, 589], [945, 575], [1005, 558.5], [1053, 540], [1089, 521], [1115, 500], [1130, 478], [1135, 455], [1130, 433], [1118, 413], [1097, 391], [1066, 370], [1029, 349]];
const hook = [[793, 262], [770, 249.5], [755, 241.5], [738, 234.5], [722, 230.5], [708, 229.5], [702, 231], [697, 235], [693, 243], [691.5, 254], [692.5, 270], [696, 290], [699.5, 312], [701.5, 325], [701.5, 338], [699.5, 346], [695, 351], [685, 356]];

const Scene = () => (
  <svg width="860" height="575" viewBox="380 126 860 575" fill="none">
    <g shapeRendering="crispEdges" strokeWidth="1">
      <path stroke="#101014" d={smooth(darkArc)} />
      <path stroke="#30f730" d="M1029 349 998 335.500 968 326.500 932 321 903 318.500 876 318.500 850 319.500 808 324.500 760 334 706 348 661 365 611 387 569 410 534 434 507 459 487 481 475 505 471.500 523 473 537 480 553 492 566 509 577 532 588 561 596 597 604 655 610.500" />
      <path stroke="#101014" d={smooth(hook)} />
    </g>
    <g fill="none" stroke="#30f730" strokeWidth="1.500" shapeRendering="crispEdges">
      <rect x="1027.500" y="347.500" width="3" height="3" /><rect x="653.500" y="609.500" width="3" height="3" />
    </g>
    <NavCube />
    <AxisCross />
  </svg>
);

/* ---------- panels ---------- */

const treeItems = ["Freehand_BSpline", "Freehand_BSpline001", "Freehand_BSpline002"];

const ModelTree = () => (
  <Tree>
    <TreeRow>
      <Branch $w={20}>
        <svg width="20" height="22" fill="none"><path d="M9.500 0v8M12 11.500h8" stroke="#d0d0d0" /><path d="m5.500 9 4 4 4-4" stroke="#9a9a9a" strokeWidth="2" /></svg>
      </Branch>
      <TreeLabel $root>
        <svg width="15" height="17" viewBox="0 0 15 17">
          <rect x="1" y="1" width="13" height="15" rx="1" fill="#f3f3f3" stroke="#8a8a8a" />
          <circle cx="9.300" cy="6" r="3.500" fill="#d9151c" /><path d="m3 7.500 3.500-2L10.500 7v5l-3.500 2.500-4-2z" fill="#3b6bb0" stroke="#183258" strokeWidth=".8" />
        </svg>
        RotationSweep_3
      </TreeLabel>
    </TreeRow>
    {treeItems.map((name, i) => (
      <TreeRow key={name}>
        <Branch $w={40} $on={i === 1}>
          <svg width="40" height="22" fill="none">
            <path d={i === 2 ? "M29.500 0v9q0 2.500 2.500 2.500h8" : "M29.500 0v22M29.500 11.500H40"} stroke={i === 1 ? "#7ba0cc" : "#cfcfcf"} />
          </svg>
        </Branch>
        <TreeLabel $on={i === 1}>
          <SplineMini size={17} />
          {name}
        </TreeLabel>
      </TreeRow>
    ))}
  </Tree>
);

type Prop = { name: string; value: string; alt?: boolean; last?: boolean; expandable?: boolean };
const baseProps: Prop[] = [
  { name: "Placement", value: "[(0,00 0,00 1,00); 0,00 º; (0,00 ...", alt: true, expandable: true },
  { name: "Label", value: "Freehand_BSpline001", last: true },
];
const profileProps: Prop[] = [
  { name: "Parametrization", value: "1,00" },
  { name: "Periodic", value: "false", alt: true },
  { name: "Support", value: "" },
  { name: "Tangents", value: "[0,00 0,00 0,00], ...", alt: true },
  { name: "Tolerance", value: "0,00", last: true },
];

const Property = ({ p }: { p: Prop }) => (
  <PropRow $alt={p.alt}>
    <svg width="20" height="25" fill="none">
      <path d={p.last ? "M9.500 0v10q0 2.500 2.500 2.500h8" : "M9.500 0v25M9.500 12.500H20"} stroke={p.alt ? "#b9b9b9" : "#d2d2d2"} />
      {p.expandable && <path d="m7.500 8 3 4.500-3 4.500" stroke="#8c8c8c" strokeWidth="2" />}
    </svg>
    <PropName>{p.name}</PropName>
    <PropValue>{p.value}</PropValue>
  </PropRow>
);

const Caret = () => <svg width="8" height="5"><path d="M.5.500h7L4 4.500z" fill="#4a4a4a" /></svg>;

export default function App() {
  return (
    <>
      <GlobalStyle />
      <Page>
        <Window>
          <TitleBar>
            <TitleSide>
              <Logo size={22} />
              <svg width="14" height="14" fill="none"><circle cx="7.300" cy="7" r="5.300" stroke="#b9bdd0" strokeWidth="1.200" /></svg>
            </TitleSide>
            <TitleText>FreeCAD 0.21.2</TitleText>
            <TitleSide $end>
              <svg width="12" height="12"><path d="M1 5.500h9" stroke="#cfd3e4" /></svg>
              <svg width="12" height="12" fill="none"><path d="M1.500 1.500h8v8h-8z" stroke="#cfd3e4" /></svg>
              <svg width="12" height="12"><path d="m1 1.500 9 9M10 1.500l-9 9" stroke="#cfd3e4" strokeWidth="1.200" /></svg>
            </TitleSide>
          </TitleBar>
          <Client>
            <MenuBar>
              <MenuItem><u>D</u>osya</MenuItem>
              <MenuItem>Düz<u>e</u>nle</MenuItem>
              <MenuItem><u>G</u>örünüm</MenuItem>
              <MenuItem>Araçlar</MenuItem>
              <MenuItem><u>M</u>akro</MenuItem>
              <MenuItem>Curves</MenuItem>
              <MenuItem>Surfaces</MenuItem>
              <MenuItem>Misc.</MenuItem>
              <MenuItem><u>P</u>encere</MenuItem>
              <MenuItem><u>Y</u>ardım</MenuItem>
              <MenuItem>Accessories</MenuItem>
            </MenuBar>
            <Tools items={mainTools} tall />
            <Tools items={curveTools} />
            <Body>
              <Dock>
                <DockTitle>
                  <DockTitleText>Birleşik görünüm</DockTitleText>
                  <DockActions>
                    <svg width="10" height="10" fill="none"><path d="M3.500.5h-3v3M6.500.5h3v3M3.500 9.500h-3v-3M6.500 9.500h3v-3M1 1l3 3M9 1 6 4M1 9l3-3M9 9 6 6" stroke="#6a6a6a" strokeWidth="1.200" strokeDasharray="2.500 .6" /></svg>
                    <svg width="8" height="8"><path d="m.7.7 6.600 6.600M7.300.7.700 7.300" stroke="#555" strokeWidth="1.500" /></svg>
                  </DockActions>
                </DockTitle>
                <Tabs>
                  <Tab>Model</Tab>
                  <Tab $active>Görevler</Tab>
                </Tabs>
                <ModelTree />
                <Splitter>{[0, 1, 2, 3, 4].map((i) => <SplitDash key={i} />)}</Splitter>
                <PropHead>
                  <PropHeadCell $pad={15} $first>Özellik</PropHeadCell>
                  <PropHeadCell $pad={10}>Değer</PropHeadCell>
                </PropHead>
                <PropTable>
                  <PropGroup>Baz</PropGroup>
                  {baseProps.map((p) => <Property key={p.name} p={p} />)}
                  <PropGroup>Profile</PropGroup>
                  {profileProps.map((p) => <Property key={p.name} p={p} />)}
                </PropTable>
                <Tabs $bottom>
                  <Tab $active>Görünüm</Tab>
                  <Tab>Veri</Tab>
                </Tabs>
              </Dock>
              <Workspace>
                <Viewport><Scene /></Viewport>
                <DocTabs>
                  <DocTab>
                    <Logo size={17} />
                    <DocName>RotationSweep_3 : 1*</DocName>
                    <svg width="14" height="14"><path d="m1.500 1.500 11 11M12.500 1.500l-11 11" stroke="#9c9c9c" strokeWidth="2.300" /></svg>
                  </DocTab>
                </DocTabs>
              </Workspace>
            </Body>
            <StatusBar>
              <StatusText>Preselected: RotationSweep_3.Freehand_BSpline001.Edge1 (4.621605 mm, -4.198671 mm, 0.000000 mm)</StatusText>
              <StatusButton $w={95}>
                <ButtonLabel $icon>
                  <svg width="11" height="15" fill="none"><rect x="1" y="1" width="9" height="13" rx="4" stroke="#333a42" strokeWidth="1.300" /><path d="M5.500 1v5M3.500 4v3.500h4V4" stroke="#333a42" /></svg>
                  Blender
                </ButtonLabel>
                <Caret />
              </StatusButton>
              <StatusButton $w={154}>
                <ButtonLabel>13,95 mm x 9,33 mm</ButtonLabel>
                <Caret />
              </StatusButton>
              <ResizeCorner>
                <svg width="12" height="12"><path d="M0 12 12 0M3.500 12 12 3.500M7 12l5-5" stroke="#bdbdbd" /></svg>
              </ResizeCorner>
            </StatusBar>
          </Client>
          <BottomEdge />
        </Window>
      </Page>
    </>
  );
}
